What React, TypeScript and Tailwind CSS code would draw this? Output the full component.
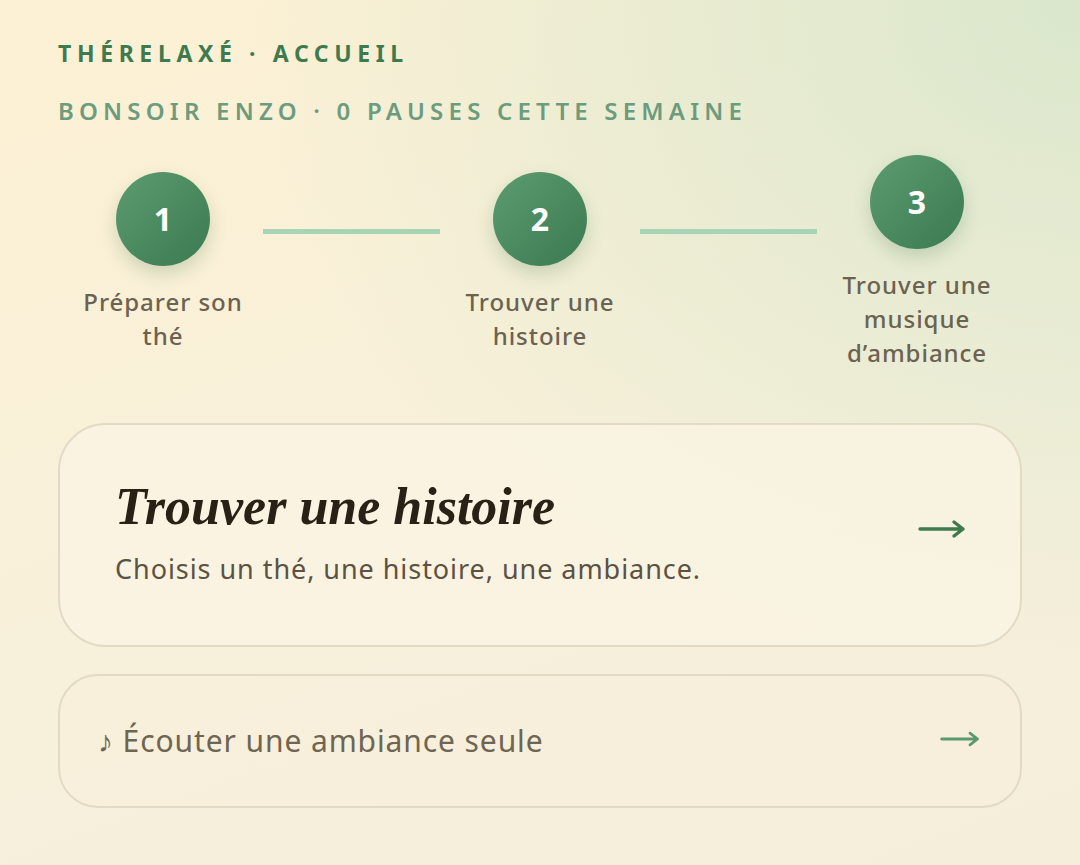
const STEPS = [
  { n: 1, label: "Préparer son thé" },
  { n: 2, label: "Trouver une histoire" },
  { n: 3, label: "Trouver une musique d’ambiance" },
];

function Arrow({ className }: { className?: string }) {
  return (
    <svg className={className} viewBox="0 0 48 20" fill="none" stroke="currentColor" strokeWidth="3.4" strokeLinecap="round" strokeLinejoin="round">
      <path d="M2 10h43M36 3l9 7-9 7" />
    </svg>
  );
}

function StepCircle({ n }: { n: number }) {
  return (
    <div className="w-[94px] h-[94px] rounded-full flex items-center justify-center bg-gradient-to-br from-[#5b9c6f] to-[#3c7a51] shadow-[0_8px_18px_rgba(60,110,70,0.22)]">
      <span className="text-white text-[32px] font-bold font-['Open_Sans',sans-serif]">{n}</span>
    </div>
  );
}

export default function App() {
  return (
    <div className="w-[1080px] h-[865px] overflow-hidden bg-[radial-gradient(ellipse_at_100%_0%,#dae7cc_0%,rgba(218,231,204,0)_55%),linear-gradient(160deg,#fcf1d4_0%,#f7f0db_60%,#f5eedb_100%)] font-['Noto_Sans',sans-serif]">
      <div className="px-[58px] pt-[38px]">
        {/* Header */}
        <p className="text-[23px] font-bold tracking-[0.245em] text-[#3f7a4f] leading-[30px]">
          THÉRELAXÉ · ACCUEIL
        </p>
        <p className="mt-[27px] text-[24px] font-semibold tracking-[0.217em] text-[#6c9b7d] leading-[32px]">
          BONSOIR ENZO · 0 PAUSES CETTE SEMAINE
        </p>

        {/* Steps */}
        <div className="mt-[28px] px-[5px] flex items-center">
          {STEPS.map((step, i) => (
            <div key={step.n} className="contents">
              <div className="w-[200px] flex flex-col items-center">
                <StepCircle n={step.n} />
                <p className="mt-[19px] px-[14px] text-center text-[24px] font-medium tracking-[0.04em] leading-[34px] text-[#6b6251]">
                  {step.label}
                </p>
              </div>
              {i < STEPS.length - 1 && (
                <div className="flex-1 h-[5px] mb-[62px] bg-[#a8d4b6]" />
              )}
            </div>
          ))}
        </div>

        {/* Main card */}
        <div className="mt-[53px] h-[224px] rounded-[48px] border-2 border-[#e3dac6] bg-[#faf4e4]/80 pl-[55px] pr-[54px] flex items-center justify-between">
          <div className="pb-[6px]">
            <h2 className="font-['Liberation_Serif',serif] italic font-semibold text-[52px] leading-[60px] text-[#2a2116]">
              Trouver une histoire
            </h2>
            <p className="mt-[14px] text-[27px] tracking-[0.035em] leading-[36px] text-[#5c5242]">
              Choisis un thé, une histoire, une ambiance.
            </p>
          </div>
          <Arrow className="w-[48px] h-[20px] mb-[12px] text-[#3f7a4f]" />
        </div>

        {/* Secondary card */}
        <div className="mt-[27px] h-[134px] rounded-[40px] border-2 border-[#e3dac6] bg-[#f8f0dc]/70 pl-[38px] pr-[40px] flex items-center justify-between">
          <p className="text-[30px] tracking-[0.03em] leading-[40px] text-[#6e6553]">♪ Écouter une ambiance seule</p>
          <Arrow className="w-[40px] h-[18px] mb-[5px] text-[#5a9a6c]" />
        </div>
      </div>
    </div>
  );
}
